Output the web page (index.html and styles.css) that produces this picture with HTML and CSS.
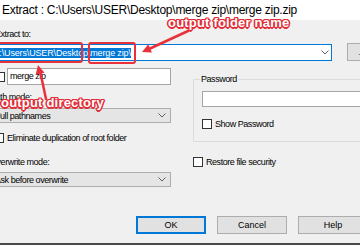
FILE: index.html
```html
<!DOCTYPE html>
<html lang="en">
<head>
    <meta charset="UTF-8">
    <meta name="viewport" content="width=device-width, initial-scale=1.0">
    <title>Extract</title>
    <link rel="stylesheet" href="styles.css">
</head>
<body>
    <div class="window">
        <div class="titlebar">Extract : C:\Users\USER\Desktop\merge zip\merge zip.zip</div>

        <div class="dialog">
            <div class="label extract-label">Extract to:</div>
            <div class="path-row">
                <div class="combo focused">
                    <span class="combo-text"><span class="selected">C:\Users\USER\Desktop\merge zip\</span></span>
                    <svg class="chevron" width="8" height="5" viewBox="0 0 8 5"><polyline points="0.5,0.5 4,4 7.5,0.5" fill="none" stroke="#606060" stroke-width="1"/></svg>
                </div>
                <button class="btn browse">...</button>
            </div>

            <div class="columns">
                <div class="col-left">
                    <div class="name-row">
                        <span class="check"></span>
                        <div class="edit">merge zip</div>
                    </div>
                    <div class="label mode-label">Path mode:</div>
                    <div class="combo list">
                        <span class="combo-text">Full pathnames</span>
                        <svg class="chevron" width="8" height="5" viewBox="0 0 8 5"><polyline points="0.5,0.5 4,4 7.5,0.5" fill="none" stroke="#606060" stroke-width="1"/></svg>
                    </div>
                    <div class="check-row eliminate"><span class="check"></span>Eliminate duplication of root folder</div>
                    <div class="label mode-label overwrite-label">Overwrite mode:</div>
                    <div class="combo list overwrite">
                        <span class="combo-text">Ask before overwrite</span>
                        <svg class="chevron" width="8" height="5" viewBox="0 0 8 5"><polyline points="0.5,0.5 4,4 7.5,0.5" fill="none" stroke="#606060" stroke-width="1"/></svg>
                    </div>
                </div>

                <div class="col-right">
                    <fieldset class="group">
                        <legend>Password</legend>
                        <div class="edit password"></div>
                        <div class="check-row show-pass"><span class="check"></span>Show Password</div>
                    </fieldset>
                    <div class="check-row restore"><span class="check"></span>Restore file security</div>
                </div>
            </div>

            <div class="buttons">
                <button class="btn default">OK</button>
                <button class="btn">Cancel</button>
                <button class="btn">Help</button>
            </div>
        </div>

        <div class="taskbar"></div>

        <!-- annotations drawn over the screenshot -->
        <div class="mark mark-dir"></div>
        <div class="mark mark-name"></div>
        <div class="callout callout-name">output folder name</div>
        <div class="callout callout-dir">output directory</div>
        <svg class="arrows" width="360" height="245" viewBox="0 0 360 245">
            <line x1="188" y1="31" x2="149" y2="49" stroke="#e8313a" stroke-width="2.5" stroke-linecap="round"/>
            <polygon points="142,52 152,52.4 148.3,44.2" fill="#e8313a"/>
            <line x1="46" y1="99" x2="40.5" y2="73" stroke="#e8313a" stroke-width="2.5" stroke-linecap="round"/>
            <polygon points="38,65 44.5,72.7 35.7,74.8" fill="#e8313a"/>
        </svg>
    </div>
</body>
</html>
```

FILE: styles.css
```css
/* Base */
* {
    box-sizing: border-box;
}

body {
    margin: 0;
    font-family: "Liberation Sans", Arial, sans-serif;
    font-size: 9px;
    letter-spacing: -0.45px;
    color: #000;
    background: #f0f0f0;
}

.window {
    position: relative;
    width: 360px;
    height: 245px;
    overflow: hidden;
    background: #f0f0f0;
}

.titlebar {
    height: 20px;
    padding-left: 2px;
    background: #fff;
    font-size: 12px;
    letter-spacing: -0.25px;
    line-height: 21px;
    white-space: nowrap;
    overflow: hidden;
}

/* Dialog (left edge is cropped off in the screenshot) */
.dialog {
    width: 385px;
    margin-left: -8px;
}

.label {
    height: 11px;
    line-height: 11px;
    white-space: nowrap;
}

.extract-label {
    margin-top: 9px;
    margin-left: 3px;
}

.path-row {
    display: flex;
    gap: 15px;
    margin-top: 4px;
}

.combo {
    display: flex;
    align-items: center;
    border: 1px solid #adadad;
    background: #fff;
}

.combo-text {
    flex: 1;
    white-space: nowrap;
    overflow: hidden;
}

.combo.focused {
    width: 340px;
    height: 17px;
    padding: 0 2px 0 0;
    border-color: #0078d7;
}

.combo.focused .combo-text {
    letter-spacing: -0.15px;
}

.selected {
    background: #0078d7;
    color: #fff;
}

.chevron {
    flex: none;
}

.btn {
    padding: 0;
    font: inherit;
    color: #000;
    background: #e1e1e1;
    border: 1px solid #adadad;
}

.browse {
    width: 30px;
    height: 18px;
    margin-top: -1px;
    color: #555;
}

/* Two columns */
.columns {
    display: grid;
    grid-template-columns: 179px 1fr;
    column-gap: 22px;
    align-items: start;
}

.name-row {
    display: flex;
    align-items: center;
    gap: 2px;
    margin-top: 7px;
}

.name-row .check {
    margin-left: 3px;
}

.edit {
    height: 17px;
    flex: 1;
    padding-left: 2px;
    line-height: 15px;
    background: #fff;
    border: 1px solid #a5a5a5;
    white-space: nowrap;
}

.check {
    flex: none;
    width: 10px;
    height: 10px;
    background: #fff;
    border: 1px solid #333;
}

.mode-label {
    margin-top: 7px;
    margin-left: -2px;
}

.combo.list {
    height: 15px;
    margin-top: 5px;
    padding: 0 4px 0 2px;
    background: #e5e5e5;
}

.check-row {
    display: flex;
    align-items: center;
    gap: 3px;
    height: 10px;
    white-space: nowrap;
}

.eliminate {
    margin-top: 10px;
    padding-left: 2px;
}

.overwrite-label {
    margin-top: 14px;
}

.combo.list.overwrite {
    margin-top: 4px;
}

/* Password group */
.group {
    margin: 13px 0 0;
    padding: 6px 8px 12px;
    min-width: 0;
    border: 1px solid #dcdcdc;
}

.group legend {
    padding: 0 1px;
    margin-left: -2px;
    line-height: 11px;
}

.edit.password {
    height: 16px;
    flex: none;
}

.show-pass {
    margin-top: 12px;
}

.restore {
    margin-top: 15px;
}

/* Buttons */
.buttons {
    display: flex;
    justify-content: flex-end;
    gap: 11px;
    margin-top: 29px;
    padding-right: 9px;
}

.buttons .btn {
    width: 70px;
    height: 18px;
}

.btn.default {
    border-color: #0078d7;
    box-shadow: inset 0 0 0 1px #0078d7;
}

.taskbar {
    height: 4px;
    margin-top: 9px;
    background: #4a4a4a;
}

/* Red annotations */
.mark {
    position: absolute;
    border: 2px solid #e8313a;
    border-radius: 3px;
}

.mark-dir {
    left: -3px;
    top: 42px;
    width: 86px;
    height: 21px;
}

.mark-name {
    left: 88px;
    top: 42px;
    width: 48px;
    height: 22px;
}

.callout {
    position: absolute;
    font-size: 13px;
    font-weight: bold;
    letter-spacing: 0.2px;
    line-height: 14px;
    color: #fff;
    white-space: nowrap;
    text-shadow: -1.5px 0 #e32b36, 1.5px 0 #e32b36, 0 -1.5px #e32b36, 0 1.5px #e32b36,
        -1px -1px #e32b36, 1px -1px #e32b36, -1px 1px #e32b36, 1px 1px #e32b36;
}

.callout-name {
    left: 168px;
    top: 16px;
}

.callout-dir {
    left: 1px;
    top: 96px;
}

.arrows {
    position: absolute;
    left: 0;
    top: 0;
    pointer-events: none;
}
```
